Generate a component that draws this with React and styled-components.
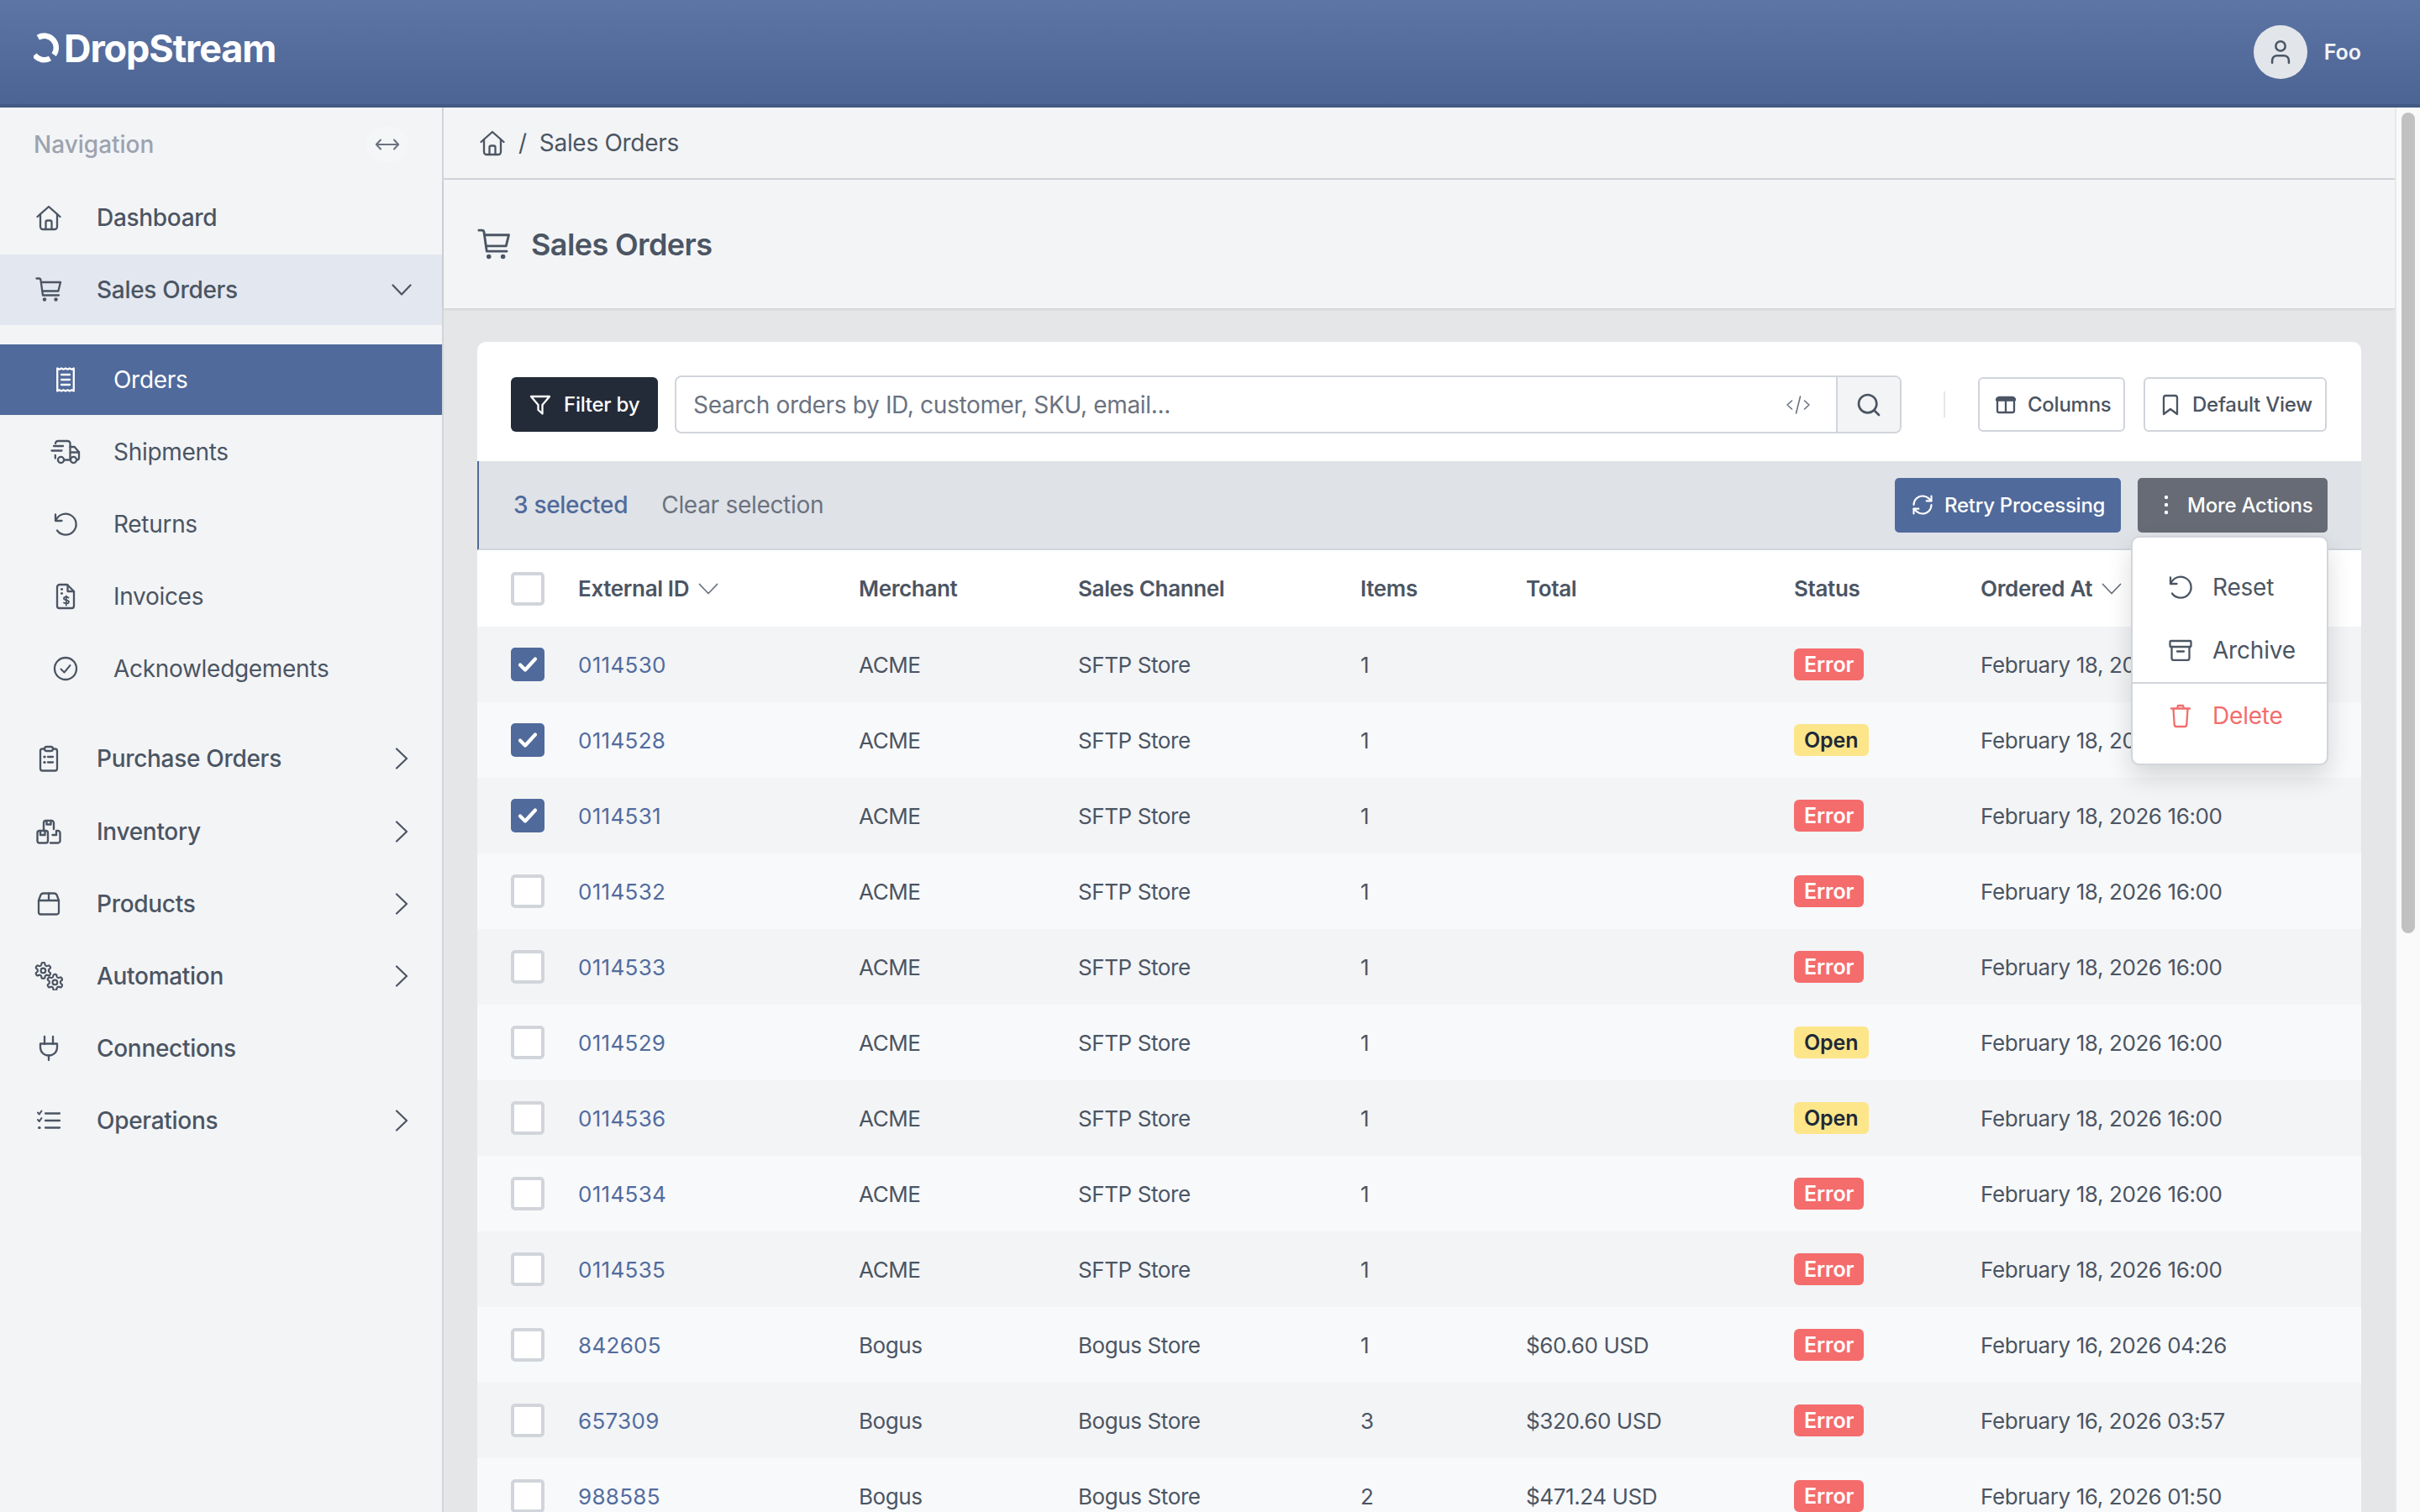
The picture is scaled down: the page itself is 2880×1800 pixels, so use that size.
import React from "react";
import styled, { createGlobalStyle } from "styled-components";
import { Search, RefreshCw, User } from "lucide-react";

const Global = createGlobalStyle`
  html, body { margin: 0; padding: 0; background: #e5e7eb; }
  body { font-family: Inter, "Liberation Sans", sans-serif; color: #4b5563; -webkit-font-smoothing: antialiased; }
  * { box-sizing: border-box; }
`;

const Page = styled.div`
  width: 2880px; height: 1800px; overflow: hidden;
  display: flex; flex-direction: column;
`;
const TopBar = styled.header`
  flex: none; height: 128px; padding: 0 70px 0 40px;
  display: flex; align-items: center; justify-content: space-between;
  background: linear-gradient(180deg, #5c75a5 0%, #4c6493 100%);
  border-bottom: 4px solid #435a85;
`;
const Logo = styled.div`
  display: flex; align-items: center; gap: 6px; margin-top: -10px;
  color: #fff; font-size: 45px; font-weight: 700; letter-spacing: -1.1px; line-height: 1;
`;
const UserBox = styled.div`
  display: flex; align-items: center; gap: 20px;
  color: #f3f4f6; font-size: 25px; font-weight: 600;
`;
const Avatar = styled.div`
  width: 64px; height: 64px; border-radius: 50%; background: #e2e5ea; color: #4b5563;
  display: flex; align-items: center; justify-content: center;
`;
const Body = styled.div`
  flex: 1; min-height: 0; display: flex;
`;
const Sidebar = styled.nav`
  flex: none; width: 528px; background: #f3f4f6; border-right: 2px solid #d1d5db;
  display: flex; flex-direction: column; letter-spacing: -0.3px;
`;
const NavTop = styled.div`
  height: 89px; padding: 22px 40px 0 40px;
  display: flex; align-items: flex-start; justify-content: space-between;
  color: #9ca3af; font-size: 28px; font-weight: 500; line-height: 44px; letter-spacing: 0;
`;
const CollapseBtn = styled.div`
  width: 50px; height: 44px; border-radius: 50%; background: #f5f6f8;
  display: flex; align-items: center; justify-content: center; color: #6b7280;
`;
const NavList = styled.div`
  display: flex; flex-direction: column; gap: 2.1px;
`;
const SubList = styled.div`
  display: flex; flex-direction: column; gap: 2.1px; margin: 23px 0 23px;
`;
const NavItem = styled.div`
  height: 84px; display: flex; align-items: center;
  padding-left: ${p => (p.$sub ? "58px" : "38px")}; padding-right: 36px;
  font-size: 28px; font-weight: ${p => (p.$sub ? 400 : 500)}; line-height: 1;
  background: ${p => (p.$active ? "#506a9b" : p.$open ? "#e3e7ef" : "transparent")};
  color: ${p => (p.$active ? "#ffffff" : "#4b5563")};
`;
const NavIcon = styled.span`
  flex: none; width: 40px; height: 40px; margin-right: 37px;
  display: flex; align-items: center; justify-content: center;
`;
const NavLabel = styled.span` flex: 1; `;
const NavChevron = styled.span` display: flex; margin-right: 4px; `;
const Main = styled.main`
  flex: 1; min-width: 0; display: flex; flex-direction: column; background: #e5e6e8;
`;
const Crumbs = styled.div`
  flex: none; height: 86px; padding: 0 40px 0 42px; display: flex; align-items: center; gap: 15px;
  background: #f3f4f6; border-bottom: 2px solid #d1d5db; font-size: 28px; line-height: 1; letter-spacing: -0.3px;
`;
const PageHead = styled.div`
  flex: none; height: 153px; padding: 0 40px; display: flex; align-items: center; gap: 24px;
  background: #f3f4f6; box-shadow: 0 1px 3px rgba(0,0,0,.12);
`;
const Title = styled.h1`
  margin: 0; font-size: 36px; font-weight: 600; line-height: 1; color: #4b5563; letter-spacing: -0.6px;
`;
const Card = styled.section`
  margin: 40px 40px 0; background: #fff; border-radius: 10px 10px 0 0; flex: 1; min-height: 0; overflow: visible;
`;
const Toolbar = styled.div`
  height: 142px; padding: 7px 40px 0; display: flex; align-items: center; letter-spacing: -0.25px;
`;
const FilterBtn = styled.div`
  flex: none; width: 175px; height: 65px; margin-right: 20px; border-radius: 6px; background: #242b38; color: #fff;
  display: flex; align-items: center; gap: 15px; padding-left: 22px; font-size: 24px; font-weight: 500;
`;
const SearchBox = styled.div`
  width: 1460px; height: 69px; flex: none; display: flex; border: 2px solid #d1d5db; border-radius: 8px; overflow: hidden;
`;
const SearchText = styled.div`
  flex: 1; padding: 0 30px 0 20px; display: flex; align-items: center; justify-content: space-between;
  color: #6b7280; font-size: 28px; letter-spacing: -0.33px;
`;
const SearchBtn = styled.div`
  flex: none; width: 76px; background: #f3f4f6; border-left: 2px solid #d1d5db; color: #4b5563;
  display: flex; align-items: center; justify-content: center;
`;
const VDivider = styled.div`
  flex: none; width: 2px; height: 31px; background: #e5e7eb; margin: 0 39px 0 50px;
`;
const GhostBtn = styled.div`
  flex: none; width: ${p => p.$w}px; height: 65px; padding-left: ${p => p.$pl}px; margin-right: ${p => p.$mr || 0}px;
  display: flex; align-items: center; gap: ${p => p.$gap}px;
  border: 2px solid #d1d5db; border-radius: 6px; background: #fff; color: #4b5563; font-size: 24px; font-weight: 500;
`;
const BulkBar = styled.div`
  position: relative; height: 106px; padding: 0 40px 0 41px; display: flex; align-items: center;
  background: #dfe2e7; border-left: 2px solid #506a9b; border-bottom: 2px solid #d1d5db;
  font-size: 28px; letter-spacing: -0.3px;
`;
const Selected = styled.span` color: #506a9b; font-weight: 500; margin-right: 40px; `;
const Clear = styled.span` color: #6b7280; `;
const Spacer = styled.div` flex: 1; `;
const ActionBtn = styled.div`
  flex: none; width: ${p => p.$w}px; height: 65px; display: flex; align-items: center; border-radius: 5px; color: #fff;
  font-size: 24px; font-weight: 500; letter-spacing: -0.25px; background: ${p => p.$bg};
  padding-left: ${p => p.$pl}px; gap: ${p => p.$gap}px; margin-right: ${p => p.$mr || 0}px;
`;
const Menu = styled.div`
  position: absolute; z-index: 5; top: 89px; right: 39px; width: 235px; height: 273px;
  background: #fff; border: 2px solid #d1d5db; border-radius: 10px;
  box-shadow: 0 14px 30px rgba(0,0,0,.14);
  display: flex; flex-direction: column; padding-top: 22px; letter-spacing: -0.2px;
`;
const MenuItem = styled.div`
  flex: none; height: ${p => p.$h}px; display: flex; align-items: center; gap: 23px; padding-left: 42px;
  font-size: 28px; color: ${p => (p.$danger ? "#f26d6d" : "#4b5563")};
`;
const MenuIcon = styled.span`
  flex: none; width: 30px; display: flex; align-items: center; justify-content: center;
`;
const MenuLine = styled.div` flex: none; height: 2px; background: #d1d5db; `;
const gridCols = "80px 334px 261px 336px 197px 319px 222px 1fr";
const HeadRow = styled.div`
  height: 91px; padding-left: 40px; display: grid; grid-template-columns: ${gridCols}; align-items: center;
  font-size: 26px; font-weight: 600; color: #4b5563; background: #fff; letter-spacing: -0.35px;
`;
const HeadCell = styled.div` display: flex; align-items: center; gap: 11px; `;
const Row = styled.div`
  height: 90px; padding-left: 40px; display: grid; grid-template-columns: ${gridCols}; align-items: center;
  font-size: 26px; color: #4b5563; letter-spacing: -0.4px; background: ${p => (p.$odd ? "#f3f4f6" : "#f8f9fb")};
`;
const Box = styled.div`
  width: 40px; height: 40px; border-radius: 5px;
  border: ${p => (p.$on ? "none" : "4px solid #d1d5db")};
  background: ${p => (p.$on ? "#506a9b" : "#fff")};
  display: flex; align-items: center; justify-content: center;
`;
const IdLink = styled.span` color: #526c9e; letter-spacing: 0.3px; `;
const Badge = styled.span`
  display: inline-flex; align-items: center; height: 38px; padding: 0 12px; border-radius: 6px;
  font-size: 25px; font-weight: 600; line-height: 1; letter-spacing: -0.1px;
  background: ${p => (p.$open ? "#fde68a" : "#f56c6c")};
  color: ${p => (p.$open ? "#1f2937" : "#fff")};
`;
const ScrollTrack = styled.div`
  flex: none; width: 30px; padding: 6px 6px 0 6px; background: #fafafa; border-left: 2px solid #e8e8e8;
`;
const ScrollThumb = styled.div` height: 977px; border-radius: 8px; background: #c1c1c1; `;

const Svg = ({ w = 32, h = 32, sw = 2.3, children, color = "currentColor" }) => (
  <svg width={w} height={h} viewBox={`0 0 ${w} ${h}`} fill="none" stroke={color} strokeWidth={sw} strokeLinecap="round" strokeLinejoin="round">{children}</svg>
);

const HomeI = () => (
  <Svg><path d="M2.500 15 16 3l13.500 12" /><path d="M6 12v15a3 3 0 0 0 3 3h14a3 3 0 0 0 3-3V12" /><path d="M12.500 30v-8.500a2 2 0 0 1 2-2h3a2 2 0 0 1 2 2V30" /></Svg>
);
const CartI = ({ s = 32 }) => (
  <svg width={s} height={s} viewBox="0 0 32 32" fill="none" stroke="currentColor" strokeWidth="2.300" strokeLinecap="round" strokeLinejoin="round">
    <path d="M1.500 2.500H4.400a2 2 0 0 1 2 1.700L9 22.500h19" /><path d="M7 7h23l-2.600 10.500H8.600" />
    <circle cx="11" cy="27.500" r="2.200" fill="currentColor" stroke="none" /><circle cx="24.500" cy="27.500" r="2.200" fill="currentColor" stroke="none" />
  </svg>
);
const ReceiptI = () => (
  <Svg w={24} h={32}><path d="M2.200 2.500l2.500 1.200 2.400-1.200 2.400 1.200L12 2.500l2.500 1.200 2.400-1.200 2.400 1.200 2.500-1.200v27l-2.500-1.200-2.400 1.200-2.400-1.200-2.500 1.200-2.500-1.200-2.400 1.200-2.400-1.200-2.500 1.200z" /><path d="M7 10h10M7 16h10M7 22h10" /></Svg>
);
const TruckI = () => (
  <Svg w={36} h={30}><path d="M6 5a3 3 0 0 1 3-3h11.500a3 3 0 0 1 3 3v19.500H17" /><path d="M23.500 9h5.200l5.300 6.300V22a2.500 2.500 0 0 1-2.500 2.500" /><path d="M24 15.500h10" /><path d="M5.800 19v3.500" /><circle cx="12.500" cy="24.500" r="3.600" /><circle cx="27.500" cy="24.500" r="3.600" /><path d="M4 8h11M1.500 13.500h12" /></Svg>
);
const UndoI = ({ color }) => (
  <Svg w={30} h={30} color={color}><path d="M3 3.500V11h7.500" /><path d="M3.500 10.500A12.500 12.500 0 1 1 5 22.500" /></Svg>
);
const InvoiceI = () => (
  <Svg w={24} h={32}><path d="M5 2h9l8 8v17.500a2.500 2.500 0 0 1-2.500 2.500h-15A2.500 2.500 0 0 1 2 27.500V5a3 3 0 0 1 3-3z" /><path d="M14.500 2.500V10H21.500" /><path d="M7 7.500h1M7 12.500h1" /><path d="M15.500 17.500c-1-1-5.500-1.500-5.500 1 0 2.600 6 1.400 6 4 0 2.400-4.500 2-6 1M12.800 15.500v11" strokeWidth="1.800" /></Svg>
);
const CheckCircleI = () => (
  <Svg w={30} h={30}><circle cx="15" cy="15" r="13" /><path d="M9.500 15.500l4 4 7-8.500" strokeWidth="2" /></Svg>
);
const ClipI = () => (
  <Svg w={24} h={32}><path d="M7 4.500H4.500a2.500 2.500 0 0 0-2.500 2.500v21a2.500 2.500 0 0 0 2.500 2.500h15A2.500 2.500 0 0 0 22 28V7a2.500 2.500 0 0 0-2.500-2.500H17" /><rect x="7" y="2" width="10" height="5" rx="2.500" /><path d="M11 14h6M11 20.500h6" /><path d="M6.800 14h.4M6.800 20.500h.4" strokeWidth="3" /></Svg>
);
const BoxesI = () => (
  <Svg w={30} h={30} sw={2.400}><path d="M9 13V4.500A2.500 2.500 0 0 1 11.500 2h7A2.500 2.500 0 0 1 21 4.500V12" /><path d="M12.500 2v4.500h5V2" /><rect x="1.500" y="14" width="12.500" height="14.500" rx="2.500" /><path d="M5 14v5h5.500v-5" /><path d="M17 28.500h9A2.500 2.500 0 0 0 28.500 26V16.500A2.500 2.500 0 0 0 26 14H24v5h-4.500" /></Svg>
);
const ProductI = () => (
  <Svg w={28} h={30}><path d="M8 2.500h12a4 4 0 0 1 4 3l2 5.500v14a2.500 2.500 0 0 1-2.500 2.500h-19A2.500 2.500 0 0 1 2 25V11l2-5.500a4 4 0 0 1 4-3z" /><path d="M2 11h24M14 2.500V11" /></Svg>
);
const gear = "M12.220 2h-.44a2 2 0 0 0-2 2v.18a2 2 0 0 1-1 1.730l-.43.25a2 2 0 0 1-2 0l-.15-.08a2 2 0 0 0-2.730.73l-.22.38a2 2 0 0 0 .73 2.730l.15.1a2 2 0 0 1 1 1.720v.51a2 2 0 0 1-1 1.740l-.15.09a2 2 0 0 0-.73 2.730l.22.38a2 2 0 0 0 2.730.73l.15-.08a2 2 0 0 1 2 0l.43.25a2 2 0 0 1 1 1.730V20a2 2 0 0 0 2 2h.44a2 2 0 0 0 2-2v-.18a2 2 0 0 1 1-1.730l.43-.25a2 2 0 0 1 2 0l.15.08a2 2 0 0 0 2.730-.73l.22-.39a2 2 0 0 0-.73-2.730l-.15-.08a2 2 0 0 1-1-1.740v-.5a2 2 0 0 1 1-1.740l.15-.09a2 2 0 0 0 .73-2.730l-.22-.38a2 2 0 0 0-2.730-.73l-.15.08a2 2 0 0 1-2 0l-.43-.25a2 2 0 0 1-1-1.730V4a2 2 0 0 0-2-2z";
const GearsI = () => (
  <Svg w={34} h={34}>
    <g transform="translate(-1 -1) scale(.95)" strokeWidth="2.300"><path d={gear} /><circle cx="12" cy="12" r="3" /></g>
    <g transform="translate(13 13) scale(.95)" strokeWidth="2.300"><path d={gear} /><circle cx="12" cy="12" r="3" /></g>
  </Svg>
);
const PlugI = () => (
  <Svg w={26} h={32}><path d="M8 2v9M18 2v9" /><path d="M3 10.500h20V15a9.500 9.500 0 0 1-9.500 9.500h-1A9.500 9.500 0 0 1 3 15z" /><path d="M13 24.500V30" /></Svg>
);
const ListCheckI = () => (
  <Svg w={30} h={26}><path d="M11 4.500h17M11 13h17M11 21.500h17" /><path d="M2 3.500l1.800 2L6.500 1.500M2 12l1.800 2 2.700-4" strokeWidth="2" /><path d="M3.500 21.500h.6" strokeWidth="3" /></Svg>
);
const ChevronDown = ({ w = 24, h = 14, sw = 2.200, color }) => (
  <Svg w={w} h={h} sw={sw} color={color}><path d={`M1.500 1.500L${w / 2} ${h - 1.5}L${w - 1.5} 1.500`} /></Svg>
);
const ChevronRight = () => (
  <Svg w={16} h={26} sw={2.200}><path d="M2 1.500L14 13 2 24.500" /></Svg>
);
const ArrowsH = () => (
  <Svg w={30} h={16} sw={2}><path d="M2 8h26M7 2.500L1.800 8 7 13.500M23 2.500L28.200 8 23 13.500" /></Svg>
);
const FunnelI = () => (
  <Svg w={26} h={26} color="#fff"><path d="M2 3h22l-8.500 10v10.500L10.500 19v-6z" /></Svg>
);
const CodeI = () => (
  <Svg w={30} h={26} sw={1.600} color="#6b7280"><path d="M7.500 8L2 13l5.500 5M22.500 8L28 13l-5.500 5M17.500 3l-5 20" /></Svg>
);
const ColumnsI = () => (
  <Svg w={24} h={24}><rect x="2" y="3" width="20" height="18" rx="2" /><path d="M2 5.500h20" strokeWidth="4.500" /><path d="M12 6v15" /></Svg>
);
const BookmarkI = () => (
  <Svg w={20} h={26}><path d="M2 4.500A2.500 2.500 0 0 1 4.500 2h11A2.500 2.500 0 0 1 18 4.500V24l-8-6-8 6z" /></Svg>
);
const TrashI = () => (
  <Svg w={26} h={30} color="#f26d6d"><path d="M2 6.500h22M9 6l1-3h6l1 3" /><path d="M4.500 7l1.200 18.500A2.500 2.500 0 0 0 8.200 28h9.600a2.500 2.500 0 0 0 2.500-2.500L21.500 7" /></Svg>
);
const ArchiveI = () => (
  <Svg w={28} h={26}><rect x="1.500" y="2" width="25" height="7" rx="1" /><path d="M3.500 9v13.500A2.500 2.500 0 0 0 6 25h16a2.500 2.500 0 0 0 2.500-2.500V9M10 14.500h8" /></Svg>
);
const DotsI = () => (
  <svg width="6" height="26" viewBox="0 0 6 26" fill="#fff"><circle cx="3" cy="4" r="2.200" /><circle cx="3" cy="13" r="2.200" /><circle cx="3" cy="22" r="2.200" /></svg>
);
const TickI = () => (
  <svg width="24" height="20" viewBox="0 0 24 20" fill="none" stroke="#fff" strokeWidth="4.200" strokeLinecap="round" strokeLinejoin="round"><path d="M3 10.500l6 6L21 3.500" /></svg>
);
const LogoMark = () => (
  <svg width="30" height="36" viewBox="0 0 30 36" fill="none" stroke="#fff" strokeWidth="6.500">
    <path d="M5.300 5.600A14.300 14.300 0 0 1 24.200 26.200" />
    <path d="M19.500 30.500A14.300 14.300 0 0 1 1 26.500" />
  </svg>
);

const topAfter = [
  ["Purchase Orders", ClipI, true],
  ["Inventory", BoxesI, true],
  ["Products", ProductI, true],
  ["Automation", GearsI, true],
  ["Connections", PlugI, false],
  ["Operations", ListCheckI, true],
];
const subs = [
  ["Orders", ReceiptI, true],
  ["Shipments", TruckI],
  ["Returns", UndoI],
  ["Invoices", InvoiceI],
  ["Acknowledgements", CheckCircleI],
];
const A = ["ACME", "SFTP Store", "1", "", "February 18, 2026 16:00"];
const rows = [
  ["0114530", ...A, "Error", true],
  ["0114528", ...A, "Open", true],
  ["0114531", ...A, "Error", true],
  ["0114532", ...A, "Error"],
  ["0114533", ...A, "Error"],
  ["0114529", ...A, "Open"],
  ["0114536", ...A, "Open"],
  ["0114534", ...A, "Error"],
  ["0114535", ...A, "Error"],
  ["842605", "Bogus", "Bogus Store", "1", "$60.60 USD", "February 16, 2026 04:26", "Error"],
  ["657309", "Bogus", "Bogus Store", "3", "$320.60 USD", "February 16, 2026 03:57", "Error"],
  ["988585", "Bogus", "Bogus Store", "2", "$471.24 USD", "February 16, 2026 01:50", "Error"],
];

export default function App() {
  return (
    <Page>
      <Global />
      <TopBar>
        <Logo><LogoMark /><span>DropStream</span></Logo>
        <UserBox>
          <Avatar><User size={34} strokeWidth={1.8} /></Avatar>
          <span>Foo</span>
        </UserBox>
      </TopBar>
      <Body>
        <Sidebar>
          <NavTop>
            <span>Navigation</span>
            <CollapseBtn><ArrowsH /></CollapseBtn>
          </NavTop>
          <NavList>
            <NavItem><NavIcon><HomeI /></NavIcon><NavLabel>Dashboard</NavLabel></NavItem>
            <NavItem $open><NavIcon><CartI /></NavIcon><NavLabel>Sales Orders</NavLabel><ChevronDown /></NavItem>
          </NavList>
          <SubList>
            {subs.map(([label, I, active]) => (
              <NavItem key={label} $sub $active={active}><NavIcon><I /></NavIcon><NavLabel>{label}</NavLabel></NavItem>
            ))}
          </SubList>
          <NavList>
            {topAfter.map(([label, I, more]) => (
              <NavItem key={label}><NavIcon><I /></NavIcon><NavLabel>{label}</NavLabel>{more && <NavChevron><ChevronRight /></NavChevron>}</NavItem>
            ))}
          </NavList>
        </Sidebar>
        <Main>
          <Crumbs><HomeI /><span>/</span><span>Sales Orders</span></Crumbs>
          <PageHead><CartI s={40} /><Title>Sales Orders</Title></PageHead>
          <Card>
            <Toolbar>
              <FilterBtn><FunnelI />Filter by</FilterBtn>
              <SearchBox>
                <SearchText><span>Search orders by ID, customer, SKU, email...</span><CodeI /></SearchText>
                <SearchBtn><Search size={32} strokeWidth={2} /></SearchBtn>
              </SearchBox>
              <VDivider />
              <GhostBtn $w={175} $pl={19} $gap={14} $mr={22}><ColumnsI />Columns</GhostBtn>
              <GhostBtn $w={218} $pl={20} $gap={16}><BookmarkI />Default View</GhostBtn>
            </Toolbar>
            <BulkBar>
              <Selected>3 selected</Selected>
              <Clear>Clear selection</Clear>
              <Spacer />
              <ActionBtn $w={269} $bg="#506a9b" $pl={19} $gap={12} $mr={20}><RefreshCw size={28} strokeWidth={1.8} />Retry Processing</ActionBtn>
              <ActionBtn $w={226} $bg="#676b75" $pl={31} $gap={22}><DotsI />More Actions</ActionBtn>
              <Menu>
                <MenuItem $h={74}><MenuIcon><UndoI /></MenuIcon>Reset</MenuItem>
                <MenuItem $h={76}><MenuIcon><ArchiveI /></MenuIcon>Archive</MenuItem>
                <MenuLine />
                <MenuItem $h={75} $danger><MenuIcon><TrashI /></MenuIcon>Delete</MenuItem>
              </Menu>
            </BulkBar>
            <HeadRow>
              <Box />
              <HeadCell>External ID <ChevronDown w={24} h={14} sw={1.8} color="#6b7280" /></HeadCell>
              <HeadCell>Merchant</HeadCell>
              <HeadCell>Sales Channel</HeadCell>
              <HeadCell>Items</HeadCell>
              <HeadCell>Total</HeadCell>
              <HeadCell>Status</HeadCell>
              <HeadCell>Ordered At <ChevronDown w={24} h={14} sw={1.8} color="#6b7280" /></HeadCell>
            </HeadRow>
            {rows.map((r, i) => (
              <Row key={r[0]} $odd={i % 2 === 0}>
                <Box $on={r[7]}>{r[7] && <TickI />}</Box>
                <IdLink>{r[0]}</IdLink>
                <span>{r[1]}</span>
                <span>{r[2]}</span>
                <span>{r[3]}</span>
                <span>{r[4]}</span>
                <span><Badge $open={r[6] === "Open"}>{r[6]}</Badge></span>
                <span>{r[5]}</span>
              </Row>
            ))}
          </Card>
        </Main>
        <ScrollTrack><ScrollThumb /></ScrollTrack>
      </Body>
    </Page>
  );
}
